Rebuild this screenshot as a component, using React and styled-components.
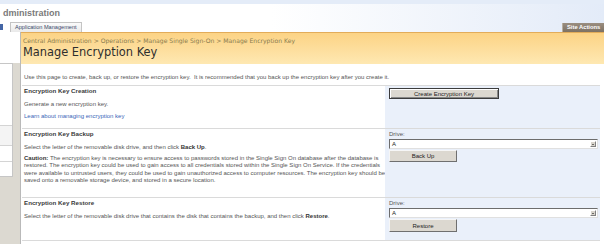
import styled, { createGlobalStyle } from "styled-components";

const GlobalStyle = createGlobalStyle`
    html, body {
        margin: 0;
        padding: 0;
        background: #fff;
    }
    body {
        width: 604px;
        height: 244px;
        overflow: hidden;
        font-family: "Liberation Sans", Arial, sans-serif;
    }
`;

const Page = styled.div`
    width: 604px;
    height: 244px;
    display: flex;
    flex-direction: column;
`;

const Header = styled.div`
    height: 32px;
    display: flex;
    flex-direction: column;
    background: linear-gradient(to right, #fff 45%, #e3ebf8 100%);
`;
const TopStrip = styled.div`
    height: 4px;
    background: #e4ecf8;
`;
const SiteTitle = styled.div`
    height: 18px;
    padding-left: 3px;
    font: bold 9px/18px "Liberation Sans", Arial, sans-serif;
    color: #7a7a7a;
`;
const TabRow = styled.div`
    height: 10px;
    display: flex;
    align-items: flex-end;
`;
const TabEdge = styled.div`
    width: 3px;
    height: 6px;
    margin-bottom: 2px;
    margin-right: 7px;
    background: #4466a6;
`;
const Tab = styled.div`
    height: 9px;
    padding: 0 4px;
    border: 1px solid #c4c4c4;
    border-bottom: none;
    background: linear-gradient(#fbfbfb, #e9e9e9);
    color: #3b4a6b;
    font-size: 5.6px;
    line-height: 9px;
    white-space: nowrap;
`;
const Spacer = styled.div`
    flex: 1;
`;
const SiteActions = styled.div`
    height: 9px;
    padding: 0 0 0 4px;
    width: 37px;
    background: linear-gradient(#9a8e80, #7d7163);
    border-left: 1px solid #b8ae9f;
    color: #fff;
    font-weight: bold;
    font-size: 5.8px;
    line-height: 9px;
    white-space: nowrap;
    overflow: hidden;
`;

const Body = styled.div`
    flex: 1;
    display: flex;
`;
const LeftNav = styled.div`
    width: 20px;
    display: flex;
    flex-direction: column;
    background: #dcd9d1;
`;
const NavTop = styled.div`
    height: 31px;
    background: #fff;
`;
const NavBox = styled.div`
    width: 12px;
    background: #fff;
    border-right: 1px solid #c6c6c6;
    border-top: 1px solid #c6c6c6;
    border-bottom: 1px solid #c6c6c6;
`;
const NavItem = styled.div`
    height: ${p => p.h}px;
    border-bottom: ${p => (p.last ? "none" : "1px solid #d4d4d4")};
    background: ${p => (p.shade ? "#f4f4f4" : "#fff")};
`;

const Main = styled.div`
    flex: 1;
    display: flex;
    flex-direction: column;
    border-left: 1px solid #b9b9b9;
`;
const TitleBar = styled.div`
    height: 31px;
    border-top: 1px solid #e2ac5a;
    background: linear-gradient(#fcd385, #fee8b2);
    padding-left: 2px;
`;
const Crumbs = styled.div`
    margin-top: 4px;
    font: 6.1px/7px "DejaVu Sans", Verdana, sans-serif;
    color: #8a7c4e;
    white-space: nowrap;
`;
const PageTitle = styled.h1`
    margin: 1px 0 0;
    font: normal 11.4px/14px "DejaVu Sans", Verdana, sans-serif;
    color: #2e2e2e;
    white-space: nowrap;
`;

const Content = styled.div`
    padding: 0 4px 0 1px;
    font-size: 6px;
    color: #555;
`;
const Intro = styled.div`
    margin: 9px 0 4px 2px;
    line-height: 8px;
    white-space: nowrap;
`;

const Section = styled.div`
    height: ${p => p.h}px;
    display: grid;
    grid-template-columns: 363px 1fr;
    border-top: 1px solid #dadada;
    border-bottom: ${p => (p.last ? "1px solid #dadada" : "none")};
`;
const SectionText = styled.div`
    padding: 1px 0 0 2px;
`;
const Heading = styled.div`
    font-weight: bold;
    font-size: 6.2px;
    color: #3a3a3a;
    line-height: 8px;
`;
const Desc = styled.div`
    margin-top: 5px;
    line-height: 8px;
    white-space: nowrap;
    b {
        color: #333;
    }
`;
const Link = styled.a`
    display: block;
    margin-top: 4px;
    line-height: 8px;
    color: #3a66b8;
    text-decoration: none;
`;
const Caution = styled.p`
    margin: 4px 0 0;
    line-height: 7.4px;
    white-space: nowrap;
    b {
        color: #333;
    }
`;

const Panel = styled.div`
    background: #eaf0fa;
    padding: 1px 2px 0 4px;
`;
const Label = styled.div`
    line-height: 8px;
`;
const Select = styled.div`
    height: 8px;
    margin-top: 1px;
    display: flex;
    align-items: center;
    background: #fff;
    border: 1px solid;
    border-color: #6d6d6d #e0e0e0 #e0e0e0 #6d6d6d;
    color: #222;
    line-height: 8px;
    padding-left: 2px;
`;
const Arrow = styled.div`
    margin-left: auto;
    margin-right: 1px;
    width: 6px;
    height: 6px;
    background: #d8d4cc;
    border: 1px solid;
    border-color: #fff #808080 #808080 #fff;
    box-sizing: border-box;
    display: flex;
    align-items: center;
    justify-content: center;
    &::after {
        content: "";
        border-left: 1.5px solid transparent;
        border-right: 1.5px solid transparent;
        border-top: 1.5px solid #000;
    }
`;
const Button = styled.button`
    display: block;
    width: ${p => p.w}px;
    height: ${p => p.ht || 12}px;
    margin-top: ${p => p.mt || 0}px;
    padding: 0;
    font-family: "Liberation Sans", Arial, sans-serif;
    font-size: 6px;
    color: #222;
    background: #dcd8d0;
    border: 1px solid;
    border-color: ${p => (p.primary ? "#3c3c3c" : "#f6f6f6 #6f6f6f #6f6f6f #f6f6f6")};
    box-shadow: ${p => (p.primary ? "inset 1px 1px #fff, inset -1px -1px #888" : "none")};
`;

export default function App() {
    return (
        <Page>
            <GlobalStyle />
            <Header>
                <TopStrip />
                <SiteTitle>dministration</SiteTitle>
                <TabRow>
                    <TabEdge />
                    <Tab>Application Management</Tab>
                    <Spacer />
                    <SiteActions>Site Actions</SiteActions>
                </TabRow>
            </Header>
            <Body>
                <LeftNav>
                    <NavTop />
                    <NavBox>
                        <NavItem h={61} />
                        <NavItem h={19} shade={1} />
                        <NavItem h={15} />
                        <NavItem h={14} last={1} />
                    </NavBox>
                </LeftNav>
                <Main>
                    <TitleBar>
                        <Crumbs>Central Administration &gt; Operations &gt; Manage Single Sign-On &gt; Manage Encryption Key</Crumbs>
                        <PageTitle>Manage Encryption Key</PageTitle>
                    </TitleBar>
                    <Content>
                        <Intro>Use this page to create, back up, or restore the encryption key.&nbsp; It is recommended that you back up the encryption key after you create it.</Intro>

                        <Section h={42}>
                            <SectionText>
                                <Heading>Encryption Key Creation</Heading>
                                <Desc>Generate a new encryption key.</Desc>
                                <Link href="#">Learn about managing encryption key</Link>
                            </SectionText>
                            <Panel>
                                <Button primary={1} w={110} ht={11} mt={1}>Create Encryption Key</Button>
                            </Panel>
                        </Section>

                        <Section h={68}>
                            <SectionText>
                                <Heading>Encryption Key Backup</Heading>
                                <Desc>Select the letter of the removable disk drive, and then click <b>Back Up</b>.</Desc>
                                <Caution>
                                    <b>Caution:</b> The encryption key is necessary to ensure access to passwords stored in the Single Sign On database after the database is<br />
                                    restored. The encryption key could be used to gain access to all credentials stored within the Single Sign On Service. If the credentials<br />
                                    were available to untrusted users, they could be used to gain unauthorized access to computer resources. The encryption key should be<br />
                                    saved onto a removable storage device, and stored in a secure location.
                                </Caution>
                            </SectionText>
                            <Panel>
                                <Label>Drive:</Label>
                                <Select>A<Arrow /></Select>
                                <Button w={68} mt={1}>Back Up</Button>
                            </Panel>
                        </Section>

                        <Section h={42} last={1}>
                            <SectionText>
                                <Heading>Encryption Key Restore</Heading>
                                <Desc>Select the letter of the removable disk drive that contains the disk that contains the backup, and then click <b>Restore</b>.</Desc>
                            </SectionText>
                            <Panel>
                                <Label>Drive:</Label>
                                <Select>A<Arrow /></Select>
                                <Button w={68} ht={13} mt={1}>Restore</Button>
                            </Panel>
                        </Section>
                    </Content>
                </Main>
            </Body>
        </Page>
    );
}
